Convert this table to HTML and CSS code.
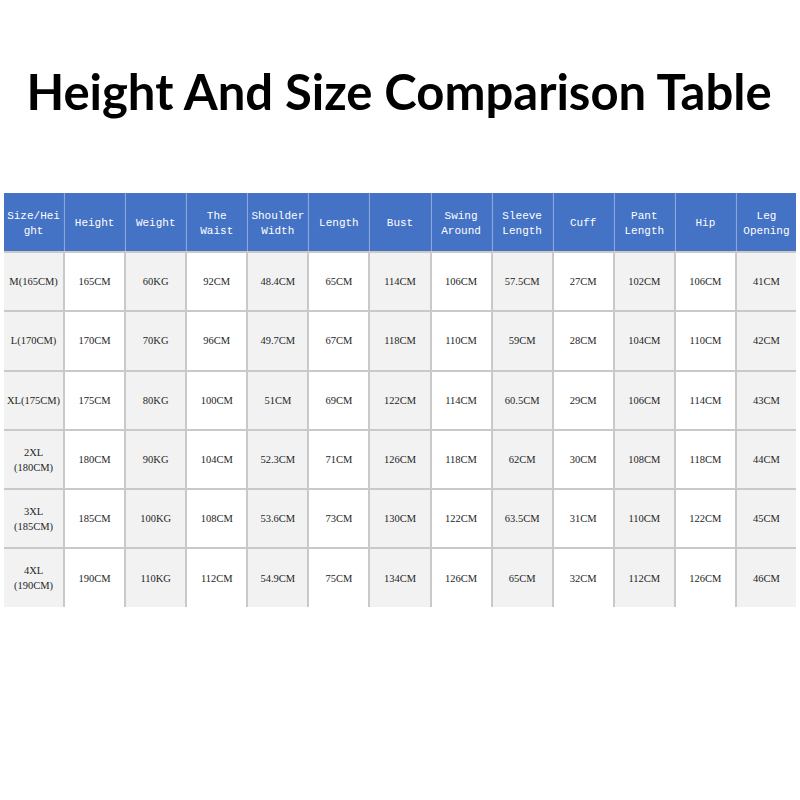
FILE: index.html
```html
<!DOCTYPE html>
<html lang="en">
<head>
<meta charset="utf-8">
<title>Height And Size Comparison Table</title>
<link rel="stylesheet" href="styles.css">
</head>
<body>
<h1 class="title">Height And Size Comparison Table</h1>
<div class="chart">
  <div class="cell head">Size/Hei<br>ght</div>
  <div class="cell head">Height</div>
  <div class="cell head">Weight</div>
  <div class="cell head">The<br>Waist</div>
  <div class="cell head">Shoulder<br>Width</div>
  <div class="cell head">Length</div>
  <div class="cell head">Bust</div>
  <div class="cell head">Swing<br>Around</div>
  <div class="cell head">Sleeve<br>Length</div>
  <div class="cell head">Cuff</div>
  <div class="cell head">Pant<br>Length</div>
  <div class="cell head">Hip</div>
  <div class="cell head last">Leg<br>Opening</div>

  <div class="cell g">M(165CM)</div><div class="cell">165CM</div><div class="cell g">60KG</div><div class="cell">92CM</div><div class="cell g">48.4CM</div><div class="cell">65CM</div><div class="cell g">114CM</div><div class="cell">106CM</div><div class="cell g">57.5CM</div><div class="cell">27CM</div><div class="cell g">102CM</div><div class="cell">106CM</div><div class="cell g">41CM</div>

  <div class="cell g">L(170CM)</div><div class="cell">170CM</div><div class="cell g">70KG</div><div class="cell">96CM</div><div class="cell g">49.7CM</div><div class="cell">67CM</div><div class="cell g">118CM</div><div class="cell">110CM</div><div class="cell g">59CM</div><div class="cell">28CM</div><div class="cell g">104CM</div><div class="cell">110CM</div><div class="cell g">42CM</div>

  <div class="cell g">XL(175CM)</div><div class="cell">175CM</div><div class="cell g">80KG</div><div class="cell">100CM</div><div class="cell g">51CM</div><div class="cell">69CM</div><div class="cell g">122CM</div><div class="cell">114CM</div><div class="cell g">60.5CM</div><div class="cell">29CM</div><div class="cell g">106CM</div><div class="cell">114CM</div><div class="cell g">43CM</div>

  <div class="cell g">2XL<br>(180CM)</div><div class="cell">180CM</div><div class="cell g">90KG</div><div class="cell">104CM</div><div class="cell g">52.3CM</div><div class="cell">71CM</div><div class="cell g">126CM</div><div class="cell">118CM</div><div class="cell g">62CM</div><div class="cell">30CM</div><div class="cell g">108CM</div><div class="cell">118CM</div><div class="cell g">44CM</div>

  <div class="cell g">3XL<br>(185CM)</div><div class="cell">185CM</div><div class="cell g">100KG</div><div class="cell">108CM</div><div class="cell g">53.6CM</div><div class="cell">73CM</div><div class="cell g">130CM</div><div class="cell">122CM</div><div class="cell g">63.5CM</div><div class="cell">31CM</div><div class="cell g">110CM</div><div class="cell">122CM</div><div class="cell g">45CM</div>

  <div class="cell g">4XL<br>(190CM)</div><div class="cell">190CM</div><div class="cell g">110KG</div><div class="cell">112CM</div><div class="cell g">54.9CM</div><div class="cell">75CM</div><div class="cell g">134CM</div><div class="cell">126CM</div><div class="cell g">65CM</div><div class="cell">32CM</div><div class="cell g">112CM</div><div class="cell">126CM</div><div class="cell g">46CM</div>
</div>
</body>
</html>
```

FILE: styles.css
```css
html, body {
  margin: 0;
  padding: 0;
  background: #ffffff;
}

.title {
  margin: 0;
  padding: 61px 2px 0 0;
  height: 193px;
  box-sizing: border-box;
  text-align: center;
  white-space: nowrap;
  font-family: "Lato", "Liberation Sans", sans-serif;
  font-weight: 700;
  font-size: 49px;
  line-height: 60px;
  color: #000;
}

.chart {
  margin: 0 4px;
  display: grid;
  grid-template-columns: repeat(13, 1fr);
  grid-template-rows: 58px repeat(6, 57.3px);
  gap: 2px;
  background: #c9c9c9;
  width: 792px;
}

.cell {
  display: flex;
  align-items: center;
  justify-content: center;
  text-align: center;
  background: #ffffff;
  font-family: "Liberation Serif", serif;
  font-size: 10.5px;
  line-height: 15px;
  color: #1e1e1e;
}

.cell.g {
  background: #f2f2f2;
}

.cell.head {
  padding-top: 3px;
  background: #4472c4;
  color: #ffffff;
  font-family: "Liberation Mono", monospace;
  font-size: 11px;
  line-height: 15px;
  box-shadow: 1px 0 0 #4a77c6, 2px 0 0 #8fa7d6;
}

.cell.head.last {
  box-shadow: none;
}
```
